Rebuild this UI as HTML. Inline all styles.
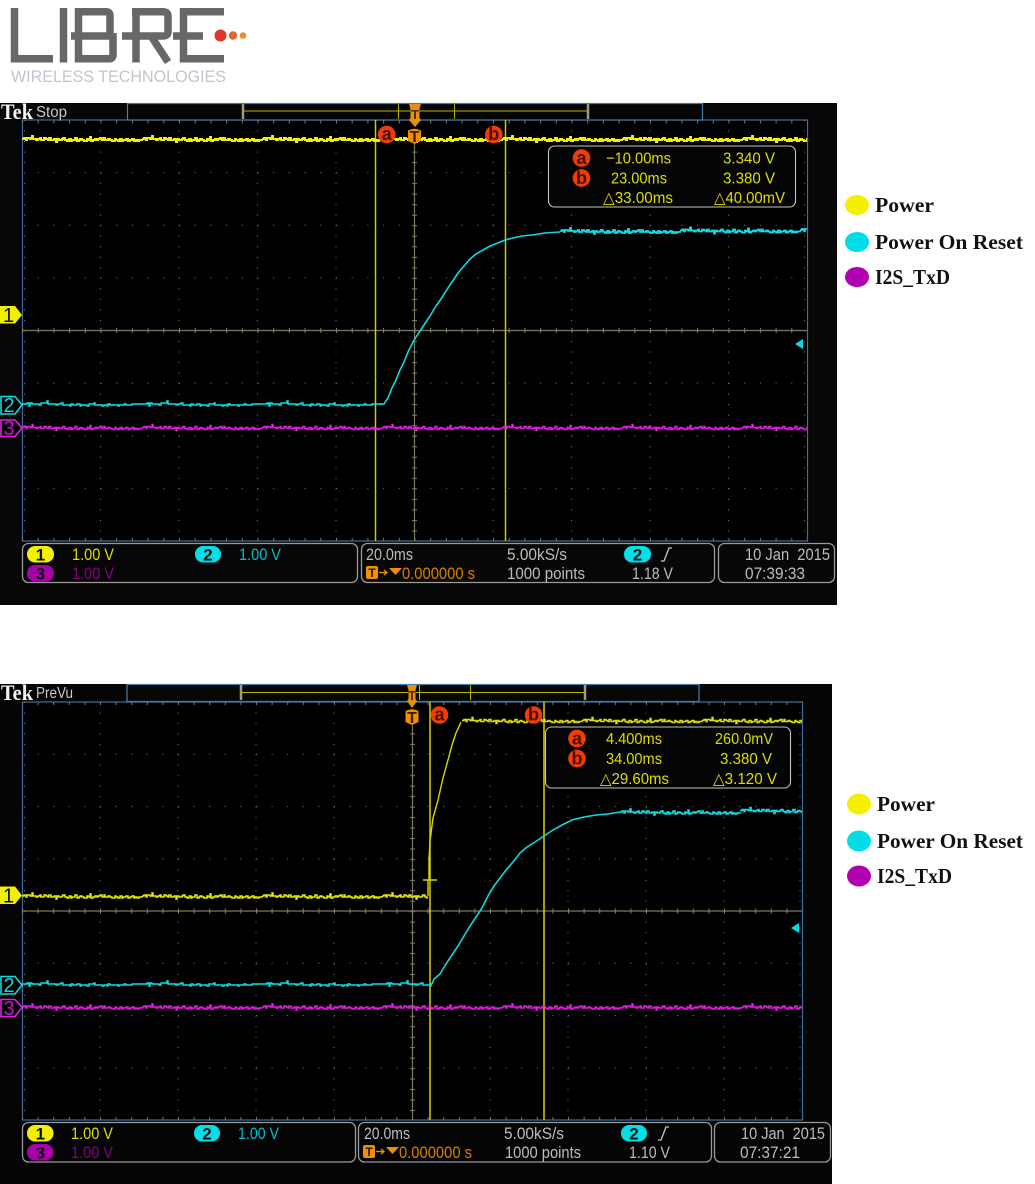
<!DOCTYPE html>
<html lang="en">
<head>
<meta charset="utf-8">
<title>Libre Wireless Technologies - Power On Reset</title>
<style>
html,body{margin:0;padding:0;background:#fff;width:1035px;height:1184px;overflow:hidden}
svg{display:block}
text{font-family:"Liberation Sans",sans-serif}
.y{fill:#dede00;font-size:16px}
.b{font-size:17px}
.c{fill:#00c0c8}
.p{fill:#860086}
.w{fill:#bdbdbd}
.o{fill:#d88000}
.lg{font-family:"Liberation Serif",serif;font-weight:bold;font-size:21.500px;fill:#111}
.pill{font-weight:bold;font-size:17px;fill:#111;text-anchor:middle}
.mk{font-weight:bold;font-size:18px;fill:#4a1000;text-anchor:middle}
.ch{font-size:20px;text-anchor:middle}
</style>
</head>
<body>
<svg width="1035" height="1184" viewBox="0 0 1035 1184" xmlns="http://www.w3.org/2000/svg">
<defs>
<path id="n1" fill="none" d="M0 0h2v-1h2v2h1v-2h3v1h2v-3h1v3h3v1h2v-1h2v-1h1v2h3v-2h2v1h2v1h1v-2h2v2h3v-1h2v3h1v-3h2v1h3v-1h1v-1h2v2h2v1h2v-2h2v2h1v-1h3v-2h2v3h2v-1h1v-1h2v1h2v1h3v-2h1v1h2v-3h1v4h2v-1h2v-1h2v1h1v-1h2v-1h2v2h2v-2h1v2h3v-1h2v1h2v1h3v-2h1v1h2v1h2v-2h2v2h1v-1h3v-1h2v2h2v-1h2v-1h2v2h1v-1h2v1h2v-1h3v-1"/>
<path id="n2" fill="none" d="M0 0h5v-1h2v3h1v-3h2v1h7v1h2v-2h6v-2h1v3h8v1h2v-1h3v-1h2v2h7v1h1v-2h2v1h4v-1h3v2h1v-1h6v1h2v-2h5v-1h1v2h7v1h2v-1h3v1h1v-2h2v1h8v1h1v-1h5v-1h2v1h6v-1h10"/>
<clipPath id="c1"><rect x="22" y="120" width="785" height="421"/></clipPath>
<clipPath id="c2"><rect x="22" y="702" width="780" height="418"/></clipPath>
<clipPath id="c2y"><rect x="22" y="702" width="406" height="418"/></clipPath>
<clipPath id="c2yr"><rect x="462" y="702" width="340" height="418"/></clipPath>
<clipPath id="c1cy"><rect x="22" y="120" width="362" height="421"/></clipPath>
<clipPath id="c1cy2"><rect x="560" y="120" width="247" height="421"/></clipPath>
<clipPath id="c2cy"><rect x="22" y="702" width="410" height="418"/></clipPath>
<clipPath id="c2cy2"><rect x="620" y="702" width="182" height="418"/></clipPath>
</defs>

<rect width="1035" height="1184" fill="#fff"/>

<!-- Logo -->
<g fill="none" stroke="#666768" stroke-width="7.500">
<path d="M14.500 8V58.800H53"/>
<path d="M63.500 8V62.500"/>
<path d="M78.500 8V62.500M75 11.800H106Q110 11.800 110 15.800V33M71 36H112M113 33V54.800Q113 58.800 109 58.800H75"/>
<path d="M136 62.500V8M132 11.800H163Q168 11.800 168 16V32Q168 36 163 36H122M151 36L168 62"/>
<path d="M224 11.800H183.500V58.800H224M173 36H203"/>
</g>
<circle cx="220.500" cy="35.500" r="6" fill="#e0352b"/>
<circle cx="233" cy="35.500" r="4.200" fill="#e8622d"/>
<circle cx="243" cy="35.500" r="3.300" fill="#ee8a30"/>
<text x="11" y="82" font-size="17" fill="#c2c5cf" textLength="215" lengthAdjust="spacingAndGlyphs">WIRELESS TECHNOLOGIES</text>

<!-- SCOPE 1 -->
<rect x="0" y="103" width="837" height="502" fill="#070707"/>
<rect x="22.500" y="120" width="785" height="421" fill="#000" stroke="#3f6f9f" stroke-width="1.200"/>
<rect x="127.500" y="103.500" width="575" height="16.500" fill="#060606" stroke="#4a7cab" stroke-width="1.200"/>
<path d="M243 111H588" stroke="#b5b500" stroke-width="1" fill="none"/>
<path d="M398.500 104V119M454.500 104V119" stroke="#b5b500" stroke-width="1"/>
<path d="M243 104V119M588 104V119" stroke="#a09c80" stroke-width="2.500"/>
<text x="1" y="119" style="font-family:'Liberation Serif',serif;font-weight:bold" font-size="22" fill="#f2f2f2" textLength="32" lengthAdjust="spacingAndGlyphs">Tek</text>
<text x="36" y="117" font-size="16" fill="#c8c8c8" textLength="31" lengthAdjust="spacingAndGlyphs">Stop</text>

<!-- grid 1 -->
<g fill="none" stroke="#7a7a70" stroke-width="1">
<path stroke-dasharray="1 9.525" d="M100.500 120V541M179 120V541M257.500 120V541M336 120V541M571.500 120V541M650 120V541M728.500 120V541M493 120V541M24.500 120V541M804.500 120V541"/>
<path stroke-dasharray="1 14.700" d="M22 172.600H807M22 225.200H807M22 277.900H807M22 383.100H807M22 435.800H807M22 488.400H807"/>
<path stroke-dasharray="1 14.700" stroke-width="3" d="M22 122H807M22 539.500H807"/>
<path stroke-dasharray="1 14.700" stroke-width="5" stroke="#8a8670" d="M22 330.500H807"/>
<path stroke-dasharray="1 9.525" stroke-width="5" d="M414.500 120V541"/>
</g>
<path d="M22 330.500H807" stroke="#7d7862" stroke-width="1.200" fill="none"/>
<path d="M414.500 143V541" stroke="#7d7862" stroke-width="1.200" fill="none"/>

<path d="M375.500 120V541M505.500 120V541" stroke="#cccc00" stroke-width="1.500" fill="none"/>

<!-- traces 1 -->
<g clip-path="url(#c1)" stroke="#f0f000" stroke-width="2">
<use href="#n1" x="22" y="139"/><use href="#n1" x="142" y="139"/><use href="#n1" x="262" y="139"/><use href="#n1" x="382" y="139"/><use href="#n1" x="502" y="139"/><use href="#n1" x="622" y="139"/><use href="#n1" x="742" y="139"/>
</g>
<g clip-path="url(#c1)" stroke="#e81ce8" stroke-width="1.500">
<use href="#n1" x="22" y="427.500"/><use href="#n1" x="142" y="427.500"/><use href="#n1" x="262" y="427.500"/><use href="#n1" x="382" y="427.500"/><use href="#n1" x="502" y="427.500"/><use href="#n1" x="622" y="427.500"/><use href="#n1" x="742" y="427.500"/>
</g>
<g clip-path="url(#c1cy)" stroke="#10e0e8" stroke-width="1.500">
<use href="#n2" x="22" y="404"/><use href="#n2" x="142" y="404"/><use href="#n2" x="262" y="404"/>
</g>
<g clip-path="url(#c1cy2)" stroke="#10e0e8" stroke-width="1.800">
<use href="#n1" x="560" y="231"/><use href="#n1" x="680" y="230.500"/><use href="#n1" x="800" y="230"/>
</g>
<path fill="none" stroke="#10d8e0" stroke-width="1.600" d="M380 404H384L388 398 392 388 396 380 400 370 404 362 408 352 412 344 416 337 420 331 426 322 430 316 436 306 441 299 446 291 452 282 458 273 464 266 470 259 476 254 483 250 490 246 498 243 505 240 513 238 522 236 532 235 545 233 560 232"/>

<!-- top markers 1 -->
<path d="M409 104H421L419.500 109V118L421 120 415 127 409 120 410.500 118V109Z" fill="#e8900c"/>
<text x="415" y="119" text-anchor="middle" font-size="13" font-weight="bold" fill="#4a2a00">T</text>
<path d="M408 130.500Q414.500 127 421 130.500V141L414.500 144 408 141Z" fill="#f09000"/>
<text x="414.500" y="142" text-anchor="middle" font-size="16" font-weight="bold" fill="#3a2000">T</text>
<circle cx="386.700" cy="134.500" r="8.800" fill="#f03c08"/>
<text x="386.700" y="140" class="mk">a</text>
<circle cx="493.800" cy="134.500" r="8.800" fill="#f03c08"/>
<text x="493.800" y="140" class="mk">b</text>

<!-- readout 1 -->
<rect x="548.500" y="146" width="247" height="61" rx="6" fill="#050505" stroke="#c4c4c4" stroke-width="1.100"/>
<circle cx="581.500" cy="158" r="8.800" fill="#f03c08"/><text x="581.500" y="164" class="mk">a</text>
<circle cx="581.500" cy="178" r="8.800" fill="#f03c08"/><text x="581.500" y="184" class="mk">b</text>
<text x="606" y="163.500" class="y" textLength="65" lengthAdjust="spacingAndGlyphs">−10.00ms</text>
<text x="723" y="163.500" class="y" textLength="52" lengthAdjust="spacingAndGlyphs">3.340 V</text>
<text x="611" y="183.500" class="y" textLength="56" lengthAdjust="spacingAndGlyphs">23.00ms</text>
<text x="723" y="183.500" class="y" textLength="52" lengthAdjust="spacingAndGlyphs">3.380 V</text>
<text x="603" y="203" class="y" textLength="70" lengthAdjust="spacingAndGlyphs">△33.00ms</text>
<text x="714" y="203" class="y" textLength="71" lengthAdjust="spacingAndGlyphs">△40.00mV</text>

<!-- left markers 1 -->
<path d="M0 306H15L22 315 15 323.500H0Z" fill="#f0f000"/>
<text x="8.500" y="322" class="ch" fill="#111">1</text>
<path d="M1 396.500H15L22 405 15 414H1Z" fill="#000" stroke="#10d8e0" stroke-width="1.600"/>
<text x="9" y="412" class="ch" fill="#10d8e0">2</text>
<path d="M1 420H15L22 428 15 436.500H1Z" fill="#000" stroke="#e020e0" stroke-width="1.600"/>
<text x="9" y="435" class="ch" fill="#c018c0">3</text>
<path d="M795 344L803 339V349Z" fill="#10d8e0"/>

<!-- bottom bar 1 -->
<g fill="none" stroke="#9a9a9a" stroke-width="1.300">
<rect x="22.500" y="543.500" width="335" height="39" rx="6"/>
<rect x="361.500" y="543.500" width="353" height="39" rx="6"/>
<rect x="718.500" y="543.500" width="116" height="39" rx="6"/>
</g>
<rect x="27" y="546" width="27" height="16.500" rx="8" fill="#f0f000"/><text x="40.500" y="560.500" class="pill">1</text>
<rect x="27" y="565" width="27" height="16.500" rx="8" fill="#a800a8"/><text x="40.500" y="579.500" class="pill">3</text>
<rect x="195" y="546" width="26" height="16.500" rx="8" fill="#00e0e8"/><text x="208" y="560.500" class="pill">2</text>
<text x="72" y="560" class="y b" textLength="42" lengthAdjust="spacingAndGlyphs">1.00 V</text>
<text x="72" y="579" class="y b p" textLength="42" lengthAdjust="spacingAndGlyphs">1.00 V</text>
<text x="239" y="560" class="y b c" textLength="42" lengthAdjust="spacingAndGlyphs">1.00 V</text>
<text x="366" y="560" class="y b w" textLength="47" lengthAdjust="spacingAndGlyphs">20.0ms</text>
<rect x="366" y="566" width="12" height="13" rx="2" fill="#f09000"/><text x="372" y="577" text-anchor="middle" font-size="12" font-weight="bold" fill="#2a1500">T</text>
<path d="M379 572.500H386M384 570L387 572.500 384 575" stroke="#f09000" stroke-width="1.300" fill="none"/>
<path d="M389 568H402L395.500 575Z" fill="#f09000"/>
<text x="402" y="579" class="y b o" textLength="73" lengthAdjust="spacingAndGlyphs">0.000000 s</text>
<text x="507" y="560" class="y b w" textLength="60" lengthAdjust="spacingAndGlyphs">5.00kS/s</text>
<text x="507" y="579" class="y b w" textLength="78" lengthAdjust="spacingAndGlyphs">1000 points</text>
<rect x="624" y="546" width="27" height="16.500" rx="8" fill="#00e0e8"/><text x="637.500" y="560.500" class="pill">2</text>
<path d="M661 561H664L669 548H672" stroke="#c8c8c8" stroke-width="1.300" fill="none"/>
<text x="632" y="579" class="y b w" textLength="41" lengthAdjust="spacingAndGlyphs">1.18 V</text>
<text x="745" y="560" class="y b w" textLength="85" lengthAdjust="spacingAndGlyphs" style="white-space:pre">10 Jan  2015</text>
<text x="745" y="579" class="y b w" textLength="60" lengthAdjust="spacingAndGlyphs">07:39:33</text>

<!-- legend 1 -->
<ellipse cx="857" cy="205" rx="12" ry="10" fill="#f4f000"/>
<ellipse cx="857" cy="242" rx="12" ry="10" fill="#00dde6"/>
<ellipse cx="857" cy="277" rx="12" ry="10" fill="#b000b0"/>
<text x="875" y="212" class="lg" textLength="59" lengthAdjust="spacingAndGlyphs">Power</text>
<text x="875" y="249" class="lg" textLength="148" lengthAdjust="spacingAndGlyphs">Power On Reset</text>
<text x="875" y="284" class="lg" textLength="75" lengthAdjust="spacingAndGlyphs">I2S_TxD</text>

<!-- SCOPE 2 -->
<rect x="0" y="684" width="832" height="500" fill="#050505"/>
<rect x="22.500" y="702" width="780" height="418" fill="#000" stroke="#3f6f9f" stroke-width="1.200"/>
<rect x="127" y="684.500" width="572" height="17" fill="#060606" stroke="#4a7cab" stroke-width="1.200"/>
<path d="M241 692.500H585" stroke="#b5b500" stroke-width="1" fill="none"/>
<path d="M419.500 685V700M470.500 685V700" stroke="#b5b500" stroke-width="1"/>
<path d="M241 685V700M585 685V700" stroke="#a09c80" stroke-width="2.500"/>
<text x="1" y="700" style="font-family:'Liberation Serif',serif;font-weight:bold" font-size="22" fill="#f2f2f2" textLength="32" lengthAdjust="spacingAndGlyphs">Tek</text>
<text x="36" y="698" font-size="16" fill="#c8c8c8" textLength="37" lengthAdjust="spacingAndGlyphs">PreVu</text>

<g fill="none" stroke="#7a7a70" stroke-width="1">
<path stroke-dasharray="1 9.460" d="M100 702V1120M178 702V1120M256 702V1120M334 702V1120M490 702V1120M568 702V1120M646 702V1120M724 702V1120M24.500 702V1120M800 702V1120"/>
<path stroke-dasharray="1 14.600" d="M22 754.200H802M22 806.500H802M22 858.700H802M22 963.200H802M22 1015.500H802M22 1067.800H802"/>
<path stroke-dasharray="1 14.600" stroke-width="3" d="M22 703.500H802M22 1118.500H802"/>
<path stroke-dasharray="1 14.600" stroke-width="5" stroke="#8a8670" d="M22 911H802"/>
<path stroke-dasharray="1 9.460" stroke-width="5" d="M412.500 702V1120"/>
</g>
<path d="M22 911H802" stroke="#7d7862" stroke-width="1.200" fill="none"/>
<path d="M412.500 725V1120" stroke="#7d7862" stroke-width="1.200" fill="none"/>
<path d="M430 702V1120M544 702V1120" stroke="#e0e000" stroke-width="1.400" fill="none"/>

<g clip-path="url(#c2y)" stroke="#ecec00" stroke-width="1.500">
<use href="#n1" x="22" y="896"/><use href="#n1" x="142" y="896"/><use href="#n1" x="262" y="896"/><use href="#n1" x="382" y="896"/>
</g>
<path d="M428 896V880H423M428 880H437M429 880V860L430 841 433 818 438 800 443 778 448 760 452 745 456 733 461 722" fill="none" stroke="#d8d800" stroke-width="1.400"/>
<g clip-path="url(#c2yr)" stroke="#e0e000" stroke-width="1.500">
<use href="#n1" x="462" y="720.500"/><use href="#n1" x="582" y="720.500"/><use href="#n1" x="702" y="720.500"/>
</g>
<g clip-path="url(#c2)" stroke="#e81ce8" stroke-width="1.500">
<use href="#n1" x="22" y="1007"/><use href="#n1" x="142" y="1007"/><use href="#n1" x="262" y="1007"/><use href="#n1" x="382" y="1007"/><use href="#n1" x="502" y="1007"/><use href="#n1" x="622" y="1007"/><use href="#n1" x="742" y="1007"/>
</g>
<g clip-path="url(#c2cy)" stroke="#10e0e8" stroke-width="1.500">
<use href="#n2" x="22" y="984"/><use href="#n2" x="142" y="984"/><use href="#n2" x="262" y="984"/><use href="#n2" x="382" y="984"/>
</g>
<g clip-path="url(#c2cy2)" stroke="#10e0e8" stroke-width="1.600">
<use href="#n1" x="620" y="812"/><use href="#n1" x="740" y="810.500"/>
</g>
<path fill="none" stroke="#10d8e0" stroke-width="1.600" d="M432 984L434 979 440 974 446 964 452 955 458 946 464 936 470 926 476 917 482 908 488 896 494 886 500 878 506 870 513 862 520 853 527 847 535 842 544 836 553 830 562 825 572 820 584 817 596 815 608 814 620 812"/>

<path d="M407 685H417L415.500 690V699L417 701 412 708 407 701 408.500 699V690Z" fill="#e8900c"/>
<text x="412" y="700" text-anchor="middle" font-size="13" font-weight="bold" fill="#4a2a00">T</text>
<path d="M405.500 711Q412 707.500 418.500 711V722L412 725 405.500 722Z" fill="#f09000"/>
<text x="412" y="723" text-anchor="middle" font-size="16" font-weight="bold" fill="#3a2000">T</text>
<circle cx="439.500" cy="715" r="8.800" fill="#f03c08"/><text x="439.500" y="720.500" class="mk">a</text>
<circle cx="533.500" cy="715" r="8.800" fill="#f03c08"/><text x="533.500" y="720.500" class="mk">b</text>

<rect x="545.500" y="727" width="245" height="61" rx="6" fill="#050505" stroke="#c4c4c4" stroke-width="1.100"/>
<circle cx="577" cy="738.500" r="8.800" fill="#f03c08"/><text x="577" y="744.500" class="mk">a</text>
<circle cx="577" cy="758.500" r="8.800" fill="#f03c08"/><text x="577" y="764.500" class="mk">b</text>
<text x="606" y="744" class="y" textLength="56" lengthAdjust="spacingAndGlyphs">4.400ms</text>
<text x="715" y="744" class="y" textLength="58" lengthAdjust="spacingAndGlyphs">260.0mV</text>
<text x="606" y="764" class="y" textLength="56" lengthAdjust="spacingAndGlyphs">34.00ms</text>
<text x="720" y="764" class="y" textLength="52" lengthAdjust="spacingAndGlyphs">3.380 V</text>
<text x="600" y="784" class="y" textLength="69" lengthAdjust="spacingAndGlyphs">△29.60ms</text>
<text x="713" y="784" class="y" textLength="64" lengthAdjust="spacingAndGlyphs">△3.120 V</text>

<path d="M0 886.500H15L22 895.500 15 904H0Z" fill="#f0f000"/>
<text x="8.500" y="902.500" class="ch" fill="#111">1</text>
<path d="M1 976.500H15L22 985 15 994H1Z" fill="#000" stroke="#10d8e0" stroke-width="1.600"/>
<text x="9" y="992" class="ch" fill="#10d8e0">2</text>
<path d="M1 999.500H15L22 1007.500 15 1016.500H1Z" fill="#000" stroke="#e020e0" stroke-width="1.600"/>
<text x="9" y="1015" class="ch" fill="#c018c0">3</text>
<path d="M791 928L799 923V933Z" fill="#10d8e0"/>

<g fill="none" stroke="#9a9a9a" stroke-width="1.300">
<rect x="22.500" y="1122.500" width="333" height="39.500" rx="6"/>
<rect x="358.500" y="1122.500" width="353" height="39.500" rx="6"/>
<rect x="714.500" y="1122.500" width="116" height="39.500" rx="6"/>
</g>
<rect x="27" y="1125" width="26.500" height="16.500" rx="8" fill="#f0f000"/><text x="40.300" y="1139.500" class="pill">1</text>
<rect x="27" y="1144" width="26.500" height="16.500" rx="8" fill="#a800a8"/><text x="40.300" y="1158.500" class="pill">3</text>
<rect x="194" y="1125" width="26" height="16.500" rx="8" fill="#00e0e8"/><text x="207" y="1139.500" class="pill">2</text>
<text x="71" y="1139" class="y b" textLength="42" lengthAdjust="spacingAndGlyphs">1.00 V</text>
<text x="71" y="1158" class="y b p" textLength="42" lengthAdjust="spacingAndGlyphs">1.00 V</text>
<text x="238" y="1139" class="y b c" textLength="41" lengthAdjust="spacingAndGlyphs">1.00 V</text>
<text x="364" y="1139" class="y b w" textLength="46" lengthAdjust="spacingAndGlyphs">20.0ms</text>
<rect x="363" y="1145" width="12" height="13" rx="2" fill="#f09000"/><text x="369" y="1156" text-anchor="middle" font-size="12" font-weight="bold" fill="#2a1500">T</text>
<path d="M376 1151.500H383M381 1149L384 1151.500 381 1154" stroke="#f09000" stroke-width="1.300" fill="none"/>
<path d="M386 1147H399L392.500 1154Z" fill="#f09000"/>
<text x="399" y="1158" class="y b o" textLength="73" lengthAdjust="spacingAndGlyphs">0.000000 s</text>
<text x="504" y="1139" class="y b w" textLength="60" lengthAdjust="spacingAndGlyphs">5.00kS/s</text>
<text x="505" y="1158" class="y b w" textLength="76" lengthAdjust="spacingAndGlyphs">1000 points</text>
<rect x="621" y="1125" width="26" height="16.500" rx="8" fill="#00e0e8"/><text x="634" y="1139.500" class="pill">2</text>
<path d="M658 1140H661L666 1127H669" stroke="#c8c8c8" stroke-width="1.300" fill="none"/>
<text x="629" y="1158" class="y b w" textLength="41" lengthAdjust="spacingAndGlyphs">1.10 V</text>
<text x="741" y="1139" class="y b w" textLength="84" lengthAdjust="spacingAndGlyphs" style="white-space:pre">10 Jan  2015</text>
<text x="740" y="1158" class="y b w" textLength="60" lengthAdjust="spacingAndGlyphs">07:37:21</text>

<ellipse cx="859" cy="804" rx="12" ry="10.500" fill="#f4f000"/>
<ellipse cx="859" cy="841" rx="12" ry="10.500" fill="#00dde6"/>
<ellipse cx="859" cy="876" rx="12" ry="10.500" fill="#b000b0"/>
<text x="877" y="811" class="lg" textLength="58" lengthAdjust="spacingAndGlyphs">Power</text>
<text x="877" y="848" class="lg" textLength="146" lengthAdjust="spacingAndGlyphs">Power On Reset</text>
<text x="877" y="883" class="lg" textLength="75" lengthAdjust="spacingAndGlyphs">I2S_TxD</text>
</svg>
</body>
</html>
